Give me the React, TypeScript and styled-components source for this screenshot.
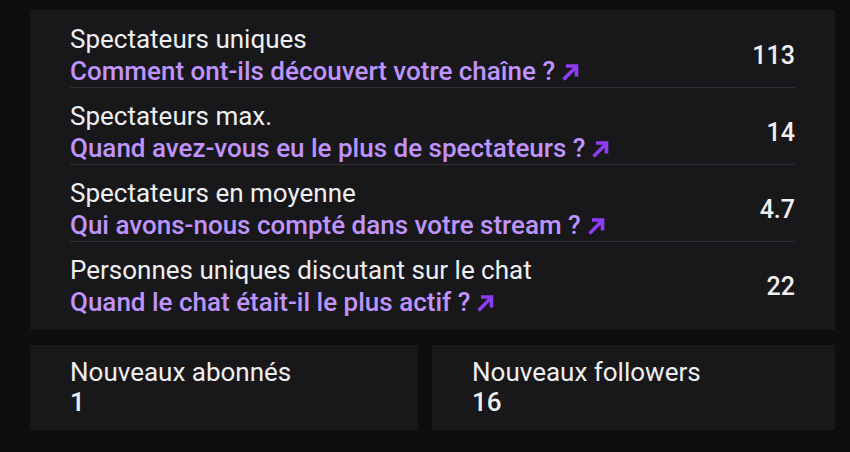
import styled, { createGlobalStyle } from "styled-components";

const GlobalStyle = createGlobalStyle`
  body {
    margin: 0;
    background: #0e0e10;
    font-family: Roboto, "Liberation Sans", sans-serif;
    color: #efeff1;
  }
`;

type Stat = {
  label: string;
  question: string;
  value: string;
};

const stats: Stat[] = [
  { label: 'Spectateurs uniques', question: 'Comment ont-ils découvert votre chaîne ?', value: '113' },
  { label: 'Spectateurs max.', question: 'Quand avez-vous eu le plus de spectateurs ?', value: '14' },
  { label: 'Spectateurs en moyenne', question: 'Qui avons-nous compté dans votre stream ?', value: '4.7' },
  { label: 'Personnes uniques discutant sur le chat', question: 'Quand le chat était-il le plus actif ?', value: '22' },
];

const ArrowIcon = () => (
  <svg width="19" height="18" viewBox="0 0 19 18" fill="none">
    <path d="M2.5 16.5 L15 4" stroke="#8f3cf7" strokeWidth="3.6" />
    <path d="M5 3 H15.5 V13.5" stroke="#8f3cf7" strokeWidth="3.6" />
  </svg>
);

const App = () => {
  return (
    <StyledPage>
      <GlobalStyle />
      <Panel>
        {stats.map((stat) => (
          <StatRow key={stat.label}>
            <div>
              <Label>{stat.label}</Label>
              <Question href="#">
                {stat.question}
                <ArrowIcon />
              </Question>
            </div>
            <Value>{stat.value}</Value>
          </StatRow>
        ))}
      </Panel>
      <CardGrid>
        <Card>
          <CardLabel>Nouveaux abonnés</CardLabel>
          <CardValue>1</CardValue>
        </Card>
        <Card>
          <CardLabel>Nouveaux followers</CardLabel>
          <CardValue>16</CardValue>
        </Card>
      </CardGrid>
    </StyledPage>
  );
};

const StyledPage = styled.main`
  padding: 10px 15px 0 30px;
`;

const Panel = styled.section`
  background: #18181b;
  padding: 1px 40px 12px;
`;

const StatRow = styled.div`
  display: flex;
  justify-content: space-between;
  align-items: center;
  padding: 12px 0 0;
  border-bottom: 1px solid #2f2f35;
  &:last-child {
    border-bottom: 0;
  }
`;

const Label = styled.div`
  font-size: 26px;
  line-height: 32px;
  color: #efeff1;
`;

const Question = styled.a`
  display: flex;
  align-items: center;
  gap: 6px;
  font-size: 26px;
  line-height: 32px;
  font-weight: 500;
  color: #bf94ff;
  text-decoration: none;
  svg {
    margin-top: 1px;
  }
`;

const Value = styled.div`
  font-size: 25px;
  font-weight: 500;
`;

const CardGrid = styled.div`
  display: grid;
  grid-template-columns: 388fr 403fr;
  gap: 14px;
  margin-top: 15px;
`;

const Card = styled.div`
  background: #18181b;
  padding: 12px 40px 13px;
`;

const CardLabel = styled.div`
  font-size: 26px;
  line-height: 30px;
`;

const CardValue = styled.div`
  font-size: 26px;
  line-height: 30px;
  font-weight: 500;
`;

export default App;
